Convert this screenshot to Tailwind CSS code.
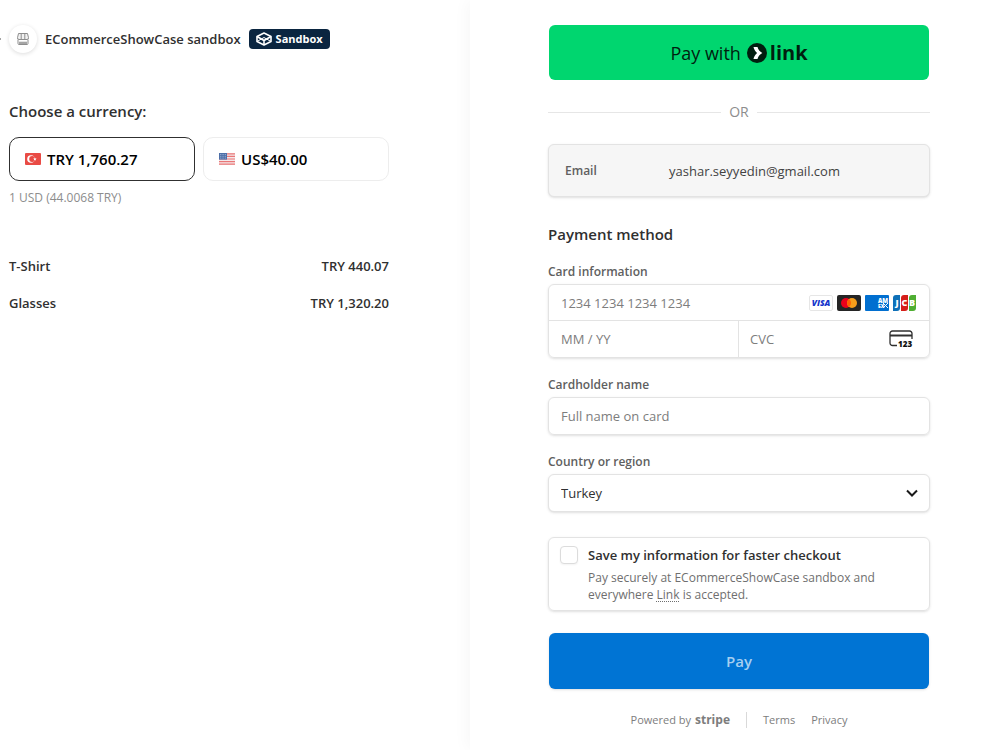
<!DOCTYPE html>
<html lang="en">
  <head>
    <meta charset="UTF-8" />
    <meta name="viewport" content="width=device-width, initial-scale=1.0" />
    <title>ECommerceShowCase sandbox</title>
    <script src="https://cdn.jsdelivr.net/npm/@tailwindcss/browser@4"></script>
  </head>

  <body
    class="bg-white font-['Open_Sans','Noto_Sans',sans-serif] text-[13px] leading-5 text-[#303030] min-h-screen flex overflow-x-hidden"
  >
    <!-- Order summary -->
    <section class="w-[47%] pl-[9px] pt-[25px]">
      <div class="max-w-[380px]">
        <header class="relative flex items-center gap-2 h-7">
          <a href="#" aria-label="Back" class="absolute -left-[20px] top-2">
            <svg class="w-3 h-3" viewBox="0 0 12 12" fill="none" stroke="#a3a3a3" stroke-width="2">
              <path d="M5 1 1 6l4 5M1 6h11" />
            </svg>
          </a>
          <span class="flex items-center justify-center w-7 h-7 rounded-full bg-white shadow-[0_1px_4px_rgba(0,0,0,0.14)]">
            <svg class="w-3 h-3" viewBox="0 0 12 12" fill="none" stroke="#8d8d8d">
              <path d="M1.500.5h9l1 4.200a1.600 1.600 0 0 1-1.500 1.800H2A1.600 1.600 0 0 1 .5 4.700z" fill="#f1f1f1" />
              <path d="M4.200.5v6M7.800.5v6M1 6.500v4a1 1 0 0 0 1 1h8a1 1 0 0 0 1-1v-4" />
              <path d="M2 8.700h8v2.300H2z" fill="#a5a5a5" stroke="none" />
            </svg>
          </span>
          <span class="font-semibold whitespace-nowrap">ECommerceShowCase sandbox</span>
          <span class="flex items-center gap-1 h-5 px-[7px] rounded bg-[#0a2540] text-white text-[11px] font-bold">
            <svg class="w-4 h-3.5" viewBox="0 0 16 14" fill="none" stroke="#fff" stroke-width="1.600" stroke-linejoin="round">
              <path d="M8 1 15 4.500v5L8 13 1 9.500v-5z" />
              <path d="M1 4.500 8 8.500l7-4M8 8.500V13" />
              <path d="M1 9.500 8 5.500l7 4" stroke-width="1" />
            </svg>
            Sandbox
          </span>
        </header>

        <h2 class="mt-[46px] text-[15px] leading-6 font-semibold">Choose a currency:</h2>
        <div class="mt-3.5 grid grid-cols-2 gap-2">
          <button type="button" aria-pressed="true" class="flex items-center gap-1.5 h-11 px-[15px] rounded-[10px] border border-[#303030] text-black text-[15px] font-semibold">
            <svg class="w-4 h-3" viewBox="0 0 16 12">
              <rect width="16" height="12" rx="1" fill="#e94b45" />
              <circle cx="6" cy="6" r="3.800" fill="#fff" />
              <circle cx="7.200" cy="6" r="3" fill="#e94b45" />
              <path d="m9.900 4.200.5 1.200 1.300.1-1 .8.300 1.300-1.100-.7-1.100.7.300-1.300-1-.8 1.300-.1z" fill="#fff" />
            </svg>
            TRY 1,760.27
          </button>
          <button type="button" aria-pressed="false" class="flex items-center gap-1.5 h-11 px-[15px] rounded-[10px] border border-[#ededed] text-black text-[15px] font-semibold">
            <svg class="w-4 h-3" viewBox="0 0 16 12">
              <rect width="16" height="12" rx="1" fill="#f4e9ea" />
              <path d="M0 .8h16M0 3.400h16M0 6h16M0 8.600h16M0 11.200h16" stroke="#ea7777" stroke-width="1.200" />
              <path d="M0 0h8v6.600H0z" fill="#4d6fa8" />
              <path d="M1 1.500h6M1 3.300h6M1 5.100h6" stroke="#c3d0e5" stroke-width=".7" stroke-dasharray=".8 .9" />
            </svg>
            US$40.00
          </button>
        </div>
        <p class="mt-[7px] text-xs leading-5 text-[#8d8d8d]">1 USD (44.0068 TRY)</p>

        <ul class="mt-12 flex flex-col gap-[17px] font-semibold">
          <li class="flex justify-between">
            <span>T-Shirt</span>
            <span>TRY 440.07</span>
          </li>
          <li class="flex justify-between">
            <span>Glasses</span>
            <span>TRY 1,320.20</span>
          </li>
        </ul>
      </div>
    </section>

    <!-- Payment form -->
    <main class="flex-1 pl-[78px] pr-[70px] pt-[25px] pb-5 bg-white shadow-[-4px_0_14px_rgba(0,0,0,0.03)]">
      <form class="max-w-[382px]">
        <div class="px-px">
          <button type="button" class="flex items-center justify-center gap-1.5 w-full h-[55px] rounded-md bg-[#00d66f] text-[#011e0f] text-lg">
            Pay with
            <span class="flex items-center gap-[3px] text-xl font-bold">
              <svg class="w-5 h-5" viewBox="0 0 20 20">
                <circle cx="10" cy="10" r="10" fill="#011e0f" />
                <path d="M6.500 4h4c.6 2.500 2.300 4.700 4.800 6-2.500 1.300-4.200 3.500-4.800 6h-4c.5-2.300 1.800-4.400 3.600-6-1.800-1.600-3.100-3.700-3.600-6z" fill="#fff" />
              </svg>
              link
            </span>
          </button>
        </div>

        <div class="mt-[22px] flex items-center gap-2 text-sm leading-5 text-[#8d8d8d]">
          <span class="h-px flex-1 bg-[#e6e6e6]"></span>
          OR
          <span class="h-px flex-1 bg-[#e6e6e6]"></span>
        </div>

        <div class="mt-[22px] flex items-center h-[53px] px-4 rounded-md border border-[#e3e3e3] bg-[#f6f6f6] shadow-sm">
          <span class="w-[104px] text-xs font-semibold text-[#606060]">Email</span>
          <span class="text-[#424242]">yashar.seyyedin@gmail.com</span>
        </div>

        <h2 class="mt-[25px] text-[15px] leading-6 font-semibold">Payment method</h2>

        <label for="card" class="mt-4 block text-xs leading-5 font-semibold text-[#606060]">Card information</label>
        <div class="mt-0.5 rounded-md border border-[#e3e3e3] shadow-sm">
          <div class="flex items-center h-9 pr-[13px] border-b border-[#e3e3e3]">
            <input id="card" type="text" placeholder="1234 1234 1234 1234" class="flex-1 min-w-0 h-full px-3 outline-none placeholder:text-[#7d7d7d]" />
            <div class="flex gap-1">
              <svg class="w-6 h-4" viewBox="0 0 24 16">
                <rect x=".5" y=".5" width="23" height="15" rx="1.500" fill="#fff" stroke="#e6e6e6" />
                <text x="12" y="11" text-anchor="middle" font-family="Open Sans" font-size="8.500" font-weight="800" font-style="italic" fill="#1434cb">VISA</text>
              </svg>
              <svg class="w-6 h-4" viewBox="0 0 24 16">
                <rect width="24" height="16" rx="2" fill="#252525" />
                <circle cx="9" cy="8" r="5" fill="#eb001b" />
                <circle cx="15" cy="8" r="5" fill="#f79e1b" />
                <path d="M12 4a5 5 0 0 1 0 8 5 5 0 0 1 0-8z" fill="#ff5f00" />
              </svg>
              <svg class="w-6 h-4" viewBox="0 0 24 16">
                <rect width="24" height="16" rx="1" fill="#016fd0" />
                <text x="13" y="8" font-family="Open Sans" font-size="6" font-weight="800" fill="#fff">AM</text>
                <text x="13" y="13" font-family="Open Sans" font-size="5" font-weight="800" fill="#fff">EX</text>
                <path d="m18 8 5 5m0-5-5 5" stroke="#fff" />
              </svg>
              <svg class="w-[23px] h-4" viewBox="0 0 23 16">
                <path d="M3 0h4v13a3 3 0 0 1-3 3H0V3a3 3 0 0 1 3-3z" fill="#0e70b8" />
                <path d="M11 0h4v13a3 3 0 0 1-3 3H8V3a3 3 0 0 1 3-3z" fill="#d61f1a" />
                <path d="M19 0h4v13a3 3 0 0 1-3 3h-4V3a3 3 0 0 1 3-3z" fill="#4fae32" />
                <g font-family="Open Sans" font-size="9" font-weight="800" fill="#fff" text-anchor="middle">
                  <text x="4" y="11">J</text>
                  <text x="11.500" y="11">C</text>
                  <text x="19" y="11">B</text>
                </g>
              </svg>
            </div>
          </div>
          <div class="grid grid-cols-2 h-9">
            <input type="text" aria-label="Expiration" placeholder="MM / YY" class="min-w-0 px-3 border-r border-[#e3e3e3] outline-none placeholder:text-[#7d7d7d]" />
            <div class="flex items-center pr-4">
              <input type="text" aria-label="CVC" placeholder="CVC" class="flex-1 min-w-0 h-full px-[11px] outline-none placeholder:text-[#7d7d7d]" />
              <svg class="w-6 h-[18px]" viewBox="0 0 24 18" fill="none">
                <path d="M8 15.500H3.500a2.500 2.500 0 0 1-2.500-2.500V3.500A2.500 2.500 0 0 1 3.500 1h17A2.500 2.500 0 0 1 23 3.500V9" stroke="#303030" stroke-width="1.300" />
                <path d="M1 5.500h22" stroke="#303030" stroke-width="2" />
                <text x="9" y="17" font-family="Open Sans" font-size="8" font-weight="800" fill="#111">123</text>
              </svg>
            </div>
          </div>
        </div>

        <label for="name" class="mt-[17px] block text-xs leading-5 font-semibold text-[#606060]">Cardholder name</label>
        <input id="name" type="text" placeholder="Full name on card" class="mt-0.5 block w-full h-[38px] px-3 rounded-md border border-[#e3e3e3] shadow-sm placeholder:text-[#7d7d7d]" />

        <label for="country" class="mt-[17px] block text-xs leading-5 font-semibold text-[#606060]">Country or region</label>
        <div class="relative mt-0.5">
          <select id="country" class="appearance-none block w-full h-[38px] px-3 rounded-md border border-[#e3e3e3] bg-white shadow-sm">
            <option>Turkey</option>
          </select>
          <svg class="absolute right-3 top-3 w-3 h-3.5 pointer-events-none" viewBox="0 0 12 14" fill="none" stroke="#1a1a1a" stroke-width="2">
            <path d="m1 4.500 5 5 5-5" />
          </svg>
        </div>

        <div class="mt-[25px] flex gap-2.5 h-[74px] px-[11px] pt-[7px] rounded-md border border-[#e3e3e3] shadow-sm">
          <input id="save" type="checkbox" class="appearance-none mt-px w-[18px] h-[18px] shrink-0 rounded border border-[#dcdcdc] bg-white shadow-xs" />
          <div>
            <label for="save" class="block leading-5 font-semibold">Save my information for faster checkout</label>
            <p class="mt-1 text-xs leading-[17px] text-[#6f6f6f]">
              Pay securely at ECommerceShowCase sandbox and<br />
              everywhere <a href="#" class="underline decoration-dotted underline-offset-2">Link</a> is accepted.
            </p>
          </div>
        </div>

        <div class="mt-[22px] px-px">
          <button type="submit" class="w-full h-14 rounded-md bg-[#0074d4] text-[#a6cff0] text-[15px] font-semibold shadow-sm">Pay</button>
        </div>
      </form>

      <footer class="mt-[21px] max-w-[382px] flex items-center justify-center text-[11px] leading-5 text-[#7d7d7d]">
        <a href="#" class="flex items-center gap-1">Powered by <span class="text-xs leading-5 font-bold">stripe</span></a>
        <span class="mx-4 h-4 w-px bg-[#d9d9d9]"></span>
        <a href="#">Terms</a>
        <a href="#" class="ml-4">Privacy</a>
      </footer>
    </main>
  </body>
</html>
